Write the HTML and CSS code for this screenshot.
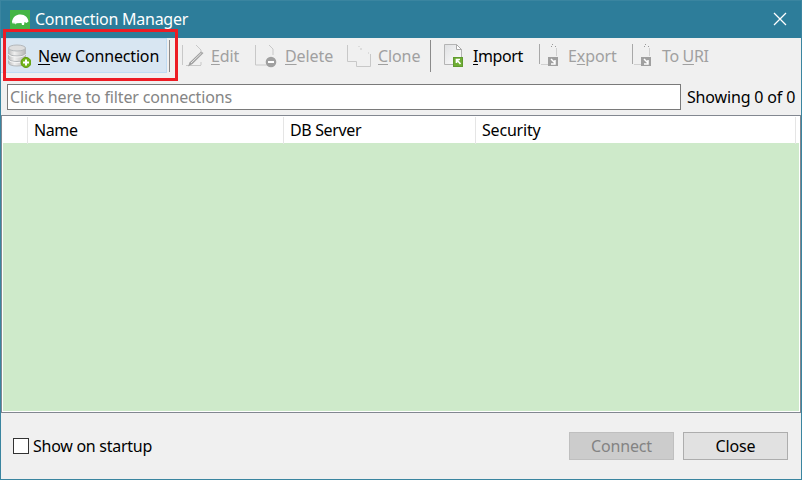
FILE: index.html
```html
<!DOCTYPE html>
<html lang="en">
<head>
<meta charset="utf-8">
<title>Connection Manager</title>
<link rel="stylesheet" href="styles.css">
</head>
<body>
<div class="window">
  <header class="titlebar">
    <svg class="app-icon" width="20" height="20" viewBox="0 0 20 20"><rect width="20" height="20" fill="#45b545"/><path d="M2 11.500C3 7 6 4.500 10.500 4.500c4.500 0 7.500 3 8 7l-2 1.500-2-1-.5 3h-2l-.5-2-5 .2-.8 1.300-1.200-1.500-2 .5z" fill="#fff"/><path d="M2.500 12.500l3.500 1" stroke="#d9efd9"/></svg>
    <span class="title">Connection Manager</span>
    <svg class="close" width="14" height="14" viewBox="0 0 14 14"><path d="M1 1l12 12M13 1L1 13" stroke="#fff" stroke-width="1.300"/></svg>
  </header>
  <nav class="toolbar">
    <div class="tool primary">
      <svg width="24" height="26" viewBox="0 0 24 26">
        <defs><linearGradient id="db"><stop stop-color="#bbb"/><stop offset=".35" stop-color="#f0f0f0"/><stop offset="1" stop-color="#b5b5b5"/></linearGradient></defs>
        <path d="M1.500 4v15c0 4 17 4 17 0V4" fill="url(#db)" stroke="#b4b8bb"/>
        <path d="M1.500 9c0 4 17 4 17 0M1.500 14.500c0 4 17 4 17 0" fill="none" stroke="#b0b4b7"/>
        <path d="M1.500 10c0 4 17 4 17 0M1.500 15.500c0 4 17 4 17 0" fill="none" stroke="#f5f5f5"/>
        <ellipse cx="10" cy="4" rx="8.500" ry="3" fill="#dedede" stroke="#b4b8bb"/>
        <circle cx="19" cy="18.500" r="5" fill="#72b51a" stroke="#5d9908"/><path d="M19 15.500v6M16 18.500h6" stroke="#fff" stroke-width="2"/>
      </svg>
      <span><u>N</u>ew Connection</span>
    </div>
    <div class="tool edit disabled">
      <svg width="24" height="26" viewBox="0 0 24 26"><path d="M.5 1v20M4 21.500h15M14 1l5 5v2M19 18v3" fill="none" stroke="#c8c8c8"/><path d="M6 22.500l1.500-4L19 7.500l2.500 1.500L10.500 20z" fill="#a0a0a0"/><path d="M9 19L19.500 9" stroke="#e7e7e7"/></svg>
      <span><u>E</u>dit</span>
    </div>
    <div class="tool delete disabled">
      <svg width="24" height="26" viewBox="0 0 24 26"><path d="M.5 1v20h12M14 1l4 4v6" fill="none" stroke="#c8c8c8"/><circle cx="16" cy="18" r="5.300" fill="#a0a0a0"/><path d="M13 18h6" stroke="#fff" stroke-width="2"/></svg>
      <span><u>D</u>elete</span>
    </div>
    <div class="tool clone disabled">
      <svg width="26" height="26" viewBox="0 0 26 26"><path d="M.5 1v16.500h9v5h14V10M12 2v1M14 4v2M21 9h1" fill="none" stroke="#c8c8c8"/></svg>
      <span><u>C</u>lone</span>
    </div>
    <div class="tool import">
      <svg width="24" height="26" viewBox="0 0 24 26">
        <defs><linearGradient id="page" x2="1" y2="1"><stop stop-color="#dfe0e2"/><stop offset="1" stop-color="#fff"/></linearGradient></defs>
        <path d="M.5.500h12l5 5v15H.5z" fill="url(#page)" stroke="#b4b4b4"/><path d="M12.500.500v5h5z" fill="#fff" stroke="#aaa"/>
        <rect x="9.500" y="13.500" width="9" height="9" fill="#6fad35" stroke="#609b2f"/><path d="M12.500 19v-3.500H16M13 16l3.500 4" fill="none" stroke="#fff" stroke-width="1.700"/>
      </svg>
      <span><u>I</u>mport</span>
    </div>
    <div class="tool export disabled">
      <svg width="24" height="26" viewBox="0 0 24 26"><path d="M.5 0v20" stroke="#a8a8a8"/><path d="M2 20.500h7M17.500 4v8" stroke="#d0d0d0"/><path d="M12 2.500h1M13 .5h1M16 2.500h1" stroke="#999"/><rect x="9" y="13" width="10" height="9" fill="#a0a0a0"/><path d="M12 15l4 4M16 16v4h-4" fill="none" stroke="#fff" stroke-width="1.500"/></svg>
      <span>E<u>x</u>port</span>
    </div>
    <div class="tool uri disabled">
      <svg width="24" height="26" viewBox="0 0 24 26"><path d="M.5 0v20" stroke="#a8a8a8"/><path d="M2 20.500h7M17.500 4v8" stroke="#d0d0d0"/><path d="M12 2.500h1M13 .5h1M16 2.500h1" stroke="#999"/><rect x="9" y="13" width="10" height="9" fill="#a0a0a0"/><path d="M12 15l4 4M16 16v4h-4" fill="none" stroke="#fff" stroke-width="1.500"/></svg>
      <span>To <u>U</u>RI</span>
    </div>
  </nav>
  <div class="highlight"></div>
  <div class="filter">
    <div class="field"><span>Click here to filter connections</span></div>
    <span class="count">Showing 0 of 0</span>
  </div>
  <main class="table">
    <div class="head">
      <div></div><div><span class="name">Name</span></div><div><span class="server">DB Server</span></div><div><span class="security">Security</span></div><div></div>
    </div>
    <div class="rows"></div>
  </main>
  <footer class="footer">
    <i class="check"></i><span class="startup">Show on startup</span>
    <div class="button off"><span>Connect</span></div>
    <div class="button"><span>Close</span></div>
  </footer>
</div>
</body>
</html>
```

FILE: styles.css
```css
* { box-sizing: border-box; }
body { margin: 0; font: 16px/24px "Noto Sans", "Open Sans", sans-serif; color: #000; }
span { white-space: nowrap; }
.window { position: relative; width: 802px; height: 480px; border: 1px solid #3a85a0; background: #f0f0f0; display: flex; flex-direction: column; }
.titlebar { height: 37px; flex: none; background: #2d7d9a; color: #fff; display: flex; align-items: center; padding: 0 14px 0 9px; }
.title { margin-left: 5px; letter-spacing: -0.26px; line-height: 22px; padding-bottom: 2px; }
.close { margin-left: auto; margin-bottom: 1px; }
.toolbar { height: 46px; flex: none; display: flex; align-items: flex-start; }
.tool { height: 35px; display: flex; align-items: center; flex: none; letter-spacing: -0.1px; }
.tool svg { flex: none; margin-top: 2px; }
.tool u { text-underline-offset: 2px; text-decoration-thickness: 1px; }
.disabled { color: #a0a0a0; }
.primary { width: 166px; padding-left: 6px; gap: 7px; background: #d8e6f2; border: 1px solid #c0dcf3; border-left: 0; letter-spacing: -0.16px; }
.edit { width: 86px; margin-left: 2px; }
.edit::before, .import::before { content: ""; width: 1px; height: 32px; background: #8b8b8b; margin-right: 12px; }
.edit span { margin-left: 5px; }
.delete { width: 92px; gap: 6px; }
.clone { width: 82px; gap: 5px; }
.import { width: 110px; padding-left: 1px; letter-spacing: -0.4px; }
.import::before { margin-right: 13px; }
.import span { margin-left: 5px; }
.export { width: 93px; gap: 5px; }
.uri { gap: 6px; letter-spacing: -0.35px; }
.highlight { position: absolute; left: 2px; top: 28px; width: 175px; height: 52px; border: 3px solid #ed1c24; }
.filter { height: 31px; flex: none; display: flex; padding-left: 6px; }
.field { width: 674px; height: 26px; border: 1px solid #7a7a7a; background: #fff; color: #858585; padding-left: 2px; margin-right: 6px; letter-spacing: -0.16px; }
.count { line-height: 26px; letter-spacing: -0.16px; }
.table { height: 298px; flex: none; border: 1px solid #828790; background: #fff; padding: 1px; }
.head { display: grid; grid-template-columns: 25px 256px 192px 320px 1fr; height: 26px; line-height: 27px; }
.head div { border-right: 1px solid #e5e5e5; padding-left: 6px; }
.head div:last-child { border: 0; }
.name { letter-spacing: -0.4px; }
.security { letter-spacing: -0.2px; }
.server { letter-spacing: -0.35px; }
.rows { height: 268px; background: #ceeaca; }
.footer { flex: 1; display: flex; align-items: center; padding: 0 13px 0 12px; }
.check { width: 16px; height: 16px; border: 1px solid #333; background: #fff; margin-right: 4px; }
.startup { margin-right: auto; letter-spacing: -0.27px; }
.button { width: 105px; height: 28px; border: 1px solid #adadad; background: #e1e1e1; text-align: center; line-height: 27px; margin-left: 9px; letter-spacing: -0.15px; }
.off { color: #838383; background: #ccc; border-color: #bfbfbf; }
```
